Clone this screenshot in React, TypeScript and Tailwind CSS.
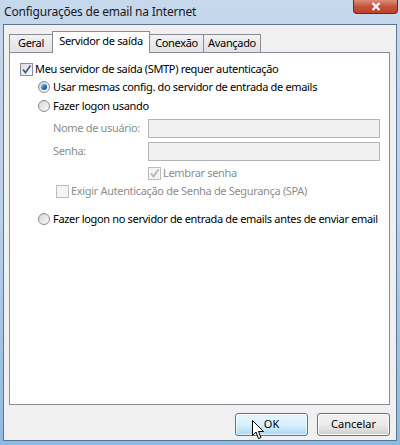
import React from 'react'

const font = { fontFamily: '"Noto Sans", "Open Sans", sans-serif' }

function Check({ checked, disabled }: { checked?: boolean; disabled?: boolean }) {
  return (
    <span
      className={`relative inline-flex h-[13px] w-[13px] shrink-0 items-center justify-center border ${
        disabled ? 'border-[#bcbcbc] bg-[#f4f4f4]' : 'border-[#8e8f8f] bg-gradient-to-br from-[#dcdcdc] to-[#fbfbfb]'
      }`}
    >
      {checked && (
        <svg width="11" height="11" viewBox="0 0 11 11">
          <path
            d="M2 5.5 L4.5 8.5 L9.5 1.5"
            fill="none"
            stroke={disabled ? '#b4b4b4' : '#3a5a9a'}
            strokeWidth="1.7"
          />
        </svg>
      )}
    </span>
  )
}

function Radio({ checked }: { checked?: boolean }) {
  return (
    <span className="inline-flex h-[12px] w-[12px] shrink-0 items-center justify-center rounded-full border border-[#8c8c8c] bg-gradient-to-br from-[#d5d5d5] to-[#fbfbfb]">
      {checked && (
        <span className="h-[6px] w-[6px] rounded-full bg-gradient-to-br from-[#8fd0f5] via-[#2a7ac0] to-[#0c3f7a]" />
      )}
    </span>
  )
}

export default function App() {
  return (
    <div
      className="relative flex h-[445px] w-[400px] flex-col bg-gradient-to-b from-[#c5d8ec] via-[#b8d0e8] to-[#8fb8df] px-[3px] pb-[4px] text-[11px] tracking-[-0.33px] text-black"
      style={font}
    >
      {/* title bar */}
      <div className="flex h-[24px] items-center justify-between pl-[1px]">
        <span className="text-[12px] tracking-[-0.2px] text-[#1a1a1a]">Configurações de email na Internet</span>
        <div className="mr-[-1px] mb-[10px] flex h-[14px] w-[45px] items-center justify-center rounded-b-[4px] border border-t-0 border-[#6b2a1e] bg-gradient-to-b from-[#d98e7c] via-[#c4543b] to-[#b8432a]">
          <svg width="10" height="9" viewBox="0 0 10 9">
            <path d="M1.5 1 L8.5 8 M8.5 1 L1.5 8" stroke="#fff" strokeWidth="2.2" />
          </svg>
        </div>
      </div>

      {/* client area */}
      <div className="flex flex-1 flex-col border border-[#5b7693] bg-[#f0f0f0] pl-[5px] pr-[6px] pt-[6px]">
        <div className="flex items-end">
          <div className="flex h-[18px] w-[44px] items-center justify-center border border-b-0 border-[#898c95] bg-gradient-to-b from-[#f2f2f2] to-[#e2e2e2]">
            Geral
          </div>
          <div className="relative z-10 -mb-px -ml-px flex h-[22px] w-[98px] items-center justify-center border border-b-0 border-[#898c95] bg-white pb-[2px]">
            Servidor de saída
          </div>
          <div className="-ml-px flex h-[18px] w-[55px] items-center justify-center border border-b-0 border-[#898c95] bg-gradient-to-b from-[#f2f2f2] to-[#e2e2e2]">
            Conexão
          </div>
          <div className="-ml-px flex h-[18px] w-[58px] items-center justify-center border border-b-0 border-[#898c95] bg-gradient-to-b from-[#f2f2f2] to-[#e2e2e2]">
            Avançado
          </div>
        </div>

        <div className="flex h-[353px] flex-col border border-[#898c95] bg-white pl-[10px] pt-[8px]">
          <div className="flex h-[16px] items-center gap-[2px]">
            <Check checked />
            <span>Meu servidor de saída (SMTP) requer autenticação</span>
          </div>
          <div className="mt-[2px] flex h-[16px] items-center gap-[3px] pl-[18px]">
            <Radio checked />
            <span>Usar mesmas config. do servidor de entrada de emails</span>
          </div>
          <div className="mt-[3px] flex h-[16px] items-center gap-[3px] pl-[18px]">
            <Radio />
            <span>Fazer logon usando</span>
          </div>

          <div className="mt-[5px] grid grid-cols-[95px_232px] items-center gap-y-[4px] pl-[33px] text-[#8d8d8d]">
            <span className="whitespace-nowrap">Nome de usuário:</span>
            <div className="h-[19px] border border-[#b2b5b8] bg-[#f0f0f0]" />
            <span>Senha:</span>
            <div className="h-[19px] border border-[#b2b5b8] bg-[#f0f0f0]" />
          </div>

          <div className="mt-[5px] flex h-[14px] items-center gap-[2px] pl-[128px] text-[#8d8d8d]">
            <Check checked disabled />
            <span>Lembrar senha</span>
          </div>
          <div className="mt-[4px] flex h-[14px] items-center gap-[2px] pl-[36px] text-[#8d8d8d]">
            <Check disabled />
            <span>Exigir Autenticação de Senha de Segurança (SPA)</span>
          </div>

          <div className="mt-[13px] flex h-[16px] items-center gap-[3px] pl-[18px]">
            <Radio />
            <span className="whitespace-nowrap">Fazer logon no servidor de entrada de emails antes de enviar email</span>
          </div>
        </div>

        <div className="mt-[8px] flex justify-end gap-[9px] tracking-normal">
          <button className="relative flex h-[23px] w-[73px] items-center justify-center rounded-[3px] border border-[#3c7fb1] bg-gradient-to-b from-[#eaf6fd] via-[#d9f0fc] to-[#a7d9f5] shadow-[inset_0_0_0_1px_#ffffffa0]">
            OK
            <svg className="absolute left-[16px] top-[6px]" width="13" height="20" viewBox="0 0 13 20">
              <path
                d="M0.5 0.5 L0.5 15.5 L4 12 L6.5 18.5 L9 17.5 L6.5 11.5 L11.5 11.5 Z"
                fill="#fff"
                stroke="#000"
                strokeWidth="1"
                strokeLinejoin="miter"
              />
            </svg>
          </button>
          <button className="flex h-[23px] w-[73px] items-center justify-center rounded-[3px] border border-[#707070] bg-gradient-to-b from-[#f2f2f2] via-[#ebebeb] to-[#cfcfcf] shadow-[inset_0_0_0_1px_#fcfcfc]">
            Cancelar
          </button>
        </div>
      </div>
    </div>
  )
}
